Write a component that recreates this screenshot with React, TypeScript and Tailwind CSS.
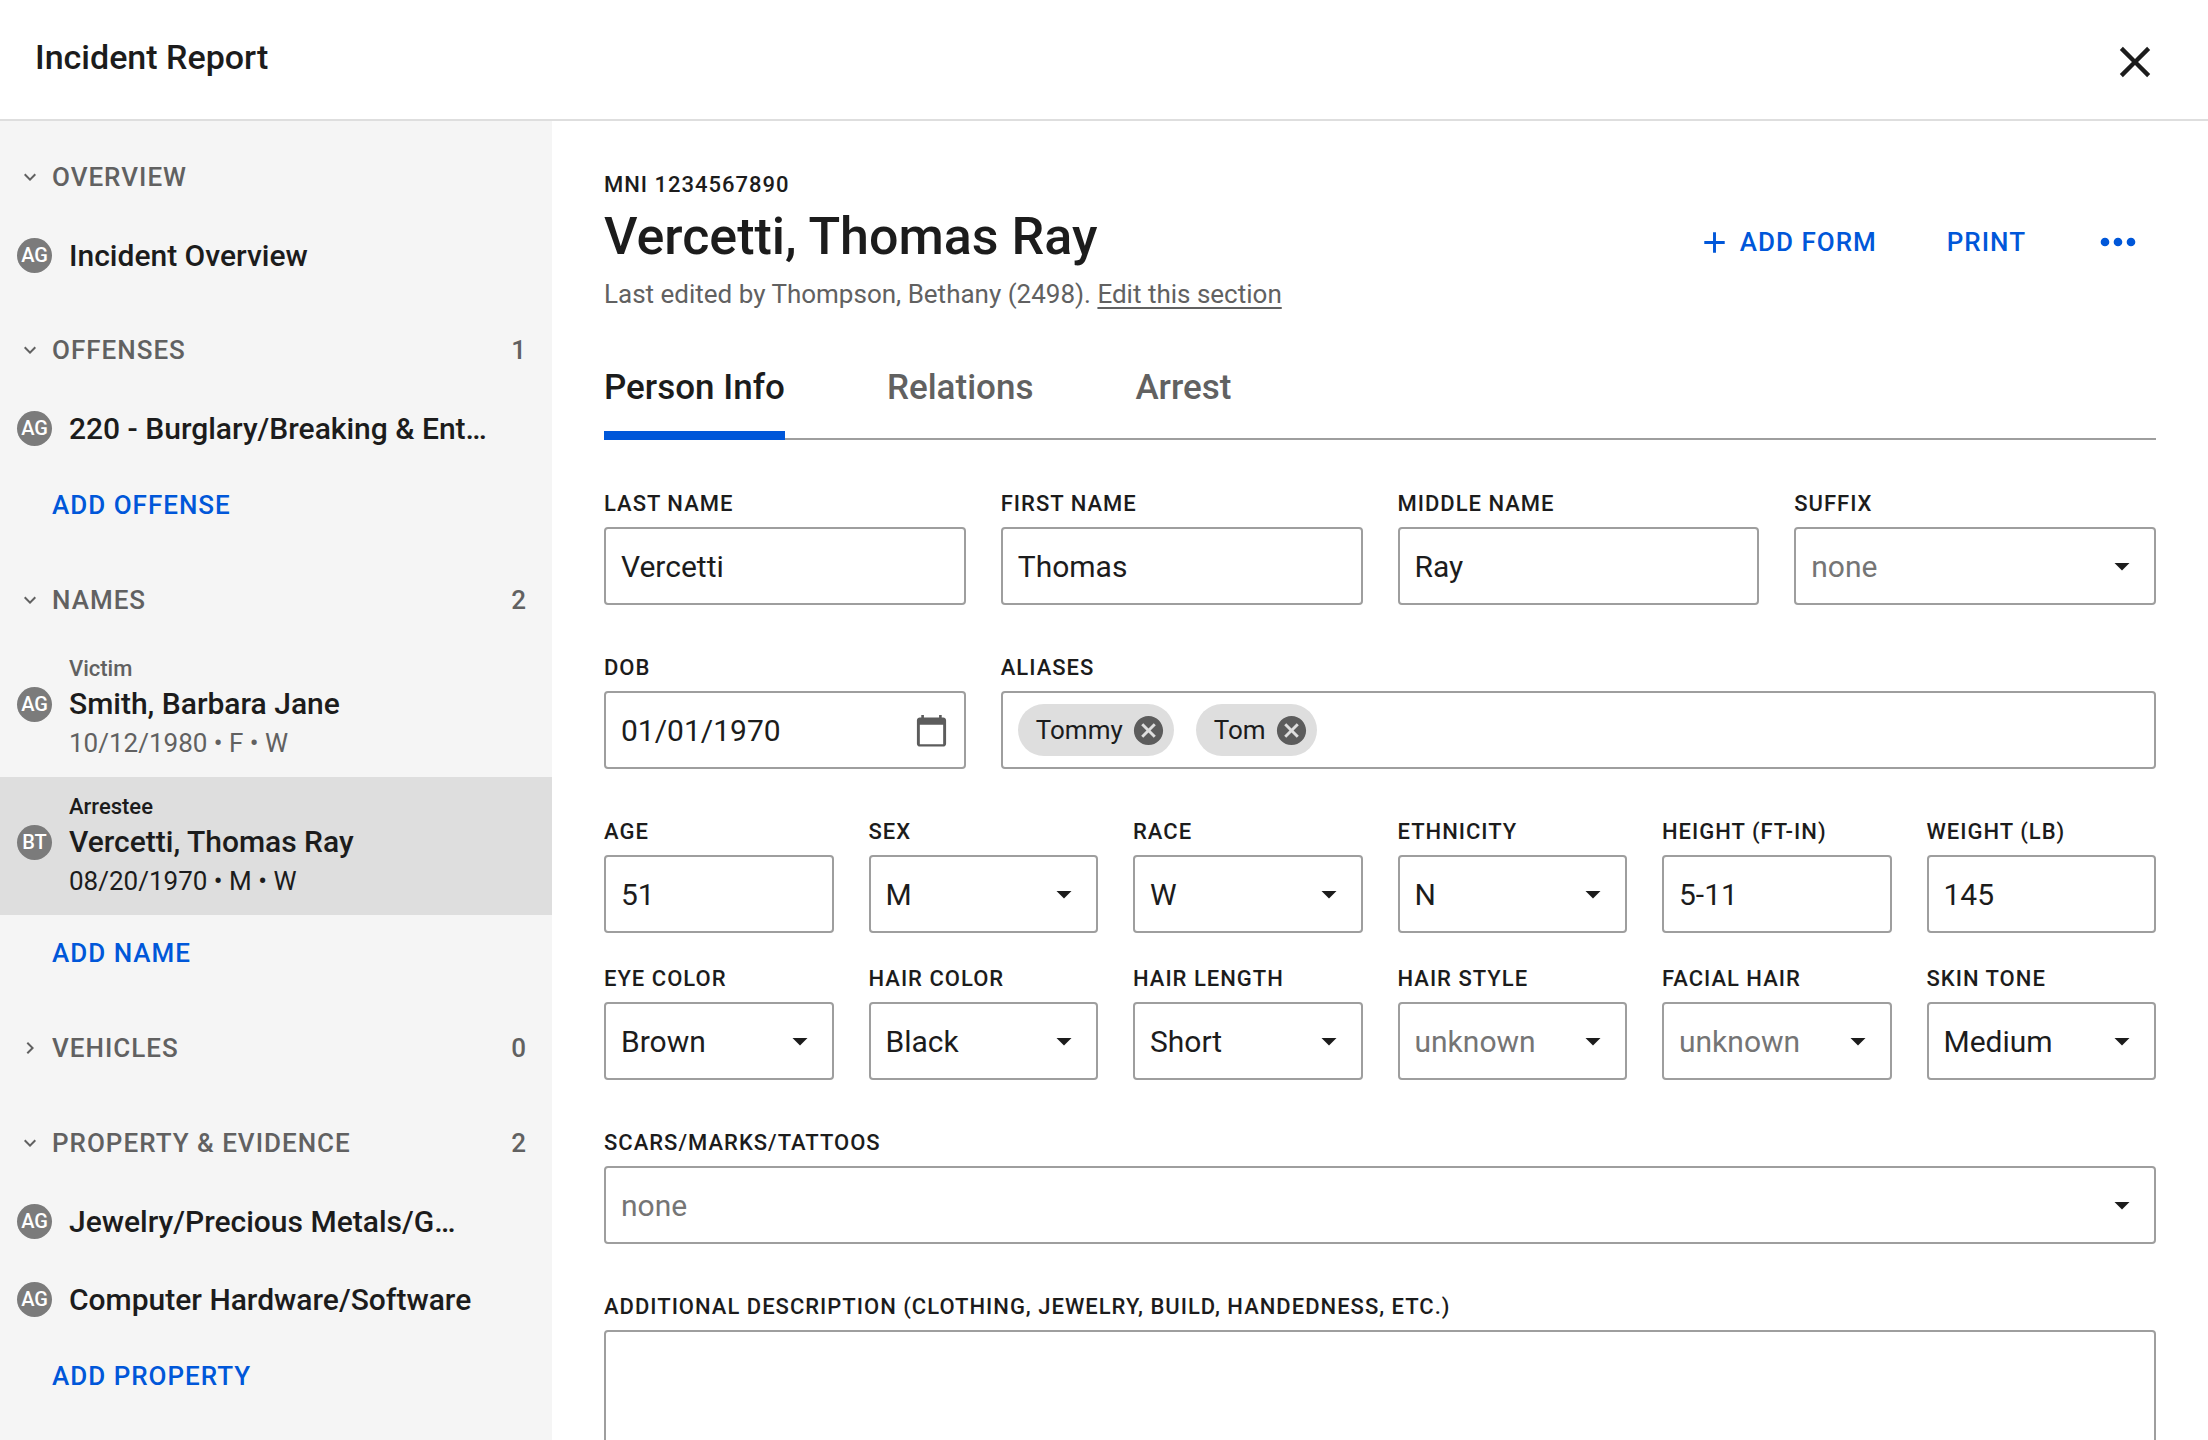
import { useState } from "react";
import type { ReactNode } from "react";
import {
  MdAdd,
  MdArrowDropDown,
  MdCancel,
  MdClose,
  MdKeyboardArrowDown,
  MdKeyboardArrowRight,
  MdMoreHoriz,
} from "react-icons/md";

type Item = {
  initials: string;
  title: string;
  role?: string;
  details?: string;
  active?: boolean;
};

type Section = {
  title: string;
  count?: number;
  collapsed?: boolean;
  items: Item[];
  action?: string;
};

const sections: Section[] = [
  {
    title: "Overview",
    items: [{ initials: "AG", title: "Incident Overview" }],
  },
  {
    title: "Offenses",
    count: 1,
    items: [{ initials: "AG", title: "220 - Burglary/Breaking & Ent…" }],
    action: "Add offense",
  },
  {
    title: "Names",
    count: 2,
    items: [
      {
        initials: "AG",
        role: "Victim",
        title: "Smith, Barbara Jane",
        details: "10/12/1980 • F • W",
      },
      {
        initials: "BT",
        role: "Arrestee",
        title: "Vercetti, Thomas Ray",
        details: "08/20/1970 • M • W",
        active: true,
      },
    ],
    action: "Add name",
  },
  { title: "Vehicles", count: 0, collapsed: true, items: [] },
  {
    title: "Property & Evidence",
    count: 2,
    items: [
      { initials: "AG", title: "Jewelry/Precious Metals/G…" },
      { initials: "AG", title: "Computer Hardware/Software" },
    ],
    action: "Add property",
  },
];

const tabs = ["Person Info", "Relations", "Arrest"];

function CalendarIcon() {
  return (
    <svg
      className="size-[35px] text-[#5c5c5c]"
      viewBox="0 0 24 24"
      fill="currentColor"
      aria-hidden="true"
    >
      <path d="M20 3h-1V1.4h-1.8V3H6.8V1.4H5V3H4c-1.1 0-2 .9-2 2v16c0 1.1.9 2 2 2h16c1.1 0 2-.9 2-2V5c0-1.1-.9-2-2-2zm0 18.4H4V8.1h16v13.3z" />
    </svg>
  );
}

function Avatar({ initials }: { initials: string }) {
  return (
    <span className="flex size-[35px] shrink-0 items-center justify-center rounded-full bg-[#7b7b7b] text-[20px] font-medium text-white">
      {initials}
    </span>
  );
}

function SidebarItem({ item }: { item: Item }) {
  if (item.role) {
    return (
      <a
        href="#"
        className={`grid h-[138px] grid-cols-[35px_1fr] content-center items-center gap-x-[17px] pl-[17px] ${
          item.active ? "bg-[#dedede] text-[#1c1c1c]" : "text-[#616161]"
        }`}
      >
        <span className="col-start-2 text-[22px] leading-[30px] font-medium">
          {item.role}
        </span>
        <Avatar initials={item.initials} />
        <span className="text-[30px] leading-10 font-medium text-[#1c1c1c]">
          {item.title}
        </span>
        <span className="col-start-2 text-[26px] leading-[38px]">
          {item.details}
        </span>
      </a>
    );
  }

  return (
    <a href="#" className="flex h-[78px] items-center gap-[17px] pl-[17px]">
      <Avatar initials={item.initials} />
      <span className="text-[30px] font-medium text-[#1c1c1c]">
        {item.title}
      </span>
    </a>
  );
}

function Field({
  id,
  label,
  className,
  children,
}: {
  id: string;
  label: string;
  className?: string;
  children: ReactNode;
}) {
  return (
    <div className={`flex min-w-0 flex-col gap-2.5 ${className ?? ""}`}>
      <label
        htmlFor={id}
        className="text-[22px] leading-[26px] font-medium tracking-[1px] uppercase"
      >
        {label}
      </label>
      {children}
    </div>
  );
}

function TextField({
  id,
  label,
  value,
}: {
  id: string;
  label: string;
  value: string;
}) {
  return (
    <Field id={id} label={label}>
      <input
        id={id}
        type="text"
        defaultValue={value}
        className="h-[78px] w-full rounded border-2 border-[#9e9e9e] bg-white px-[15px] text-[30px]"
      />
    </Field>
  );
}

function SelectField({
  id,
  label,
  value,
}: {
  id: string;
  label: string;
  value: string;
}) {
  const empty = value === "none" || value === "unknown";
  return (
    <Field id={id} label={label}>
      <div className="relative">
        <select
          id={id}
          defaultValue={value}
          className={`h-[78px] w-full appearance-none rounded border-2 border-[#9e9e9e] bg-white pr-14 pl-[15px] text-[30px] ${
            empty ? "text-[#757575]" : "text-[#1c1c1c]"
          }`}
        >
          <option>{value}</option>
        </select>
        <MdArrowDropDown className="pointer-events-none absolute inset-y-0 right-4 my-auto size-9" />
      </div>
    </Field>
  );
}

function Chip({ name }: { name: string }) {
  return (
    <span className="flex h-[52px] items-center gap-2 rounded-full bg-[#dedede] pr-2 pl-[18px] text-[26px]">
      {name}
      <button type="button" aria-label={`Remove ${name}`}>
        <MdCancel className="size-[35px] text-[#5c5c5c]" />
      </button>
    </span>
  );
}

export default function App() {
  const [tab, setTab] = useState("Person Info");

  return (
    <div className="flex h-screen flex-col overflow-hidden bg-white font-[Roboto,sans-serif] text-[#1c1c1c]">
      {/* Header */}
      <header className="flex h-[121px] shrink-0 items-center justify-between border-b-2 border-[#dedede] pr-[47px] pl-[35px]">
        <h1 className="pb-1 text-[34px] font-medium">Incident Report</h1>
        <button type="button" aria-label="Close" className="pt-1">
          <MdClose className="size-[52px]" />
        </button>
      </header>

      <div className="flex min-h-0 flex-1">
        {/* Sidebar */}
        <nav className="flex w-[25%] shrink-0 flex-col gap-[17px] bg-[#f5f5f5] pt-[17px]">
          {sections.map((section) => (
            <div key={section.title}>
              <button
                type="button"
                className="flex h-[78px] w-full items-center pr-[26px] pl-[18px] text-[26px] font-medium text-[#616161]"
              >
                {section.collapsed ? (
                  <MdKeyboardArrowRight className="size-6" />
                ) : (
                  <MdKeyboardArrowDown className="size-6" />
                )}
                <span className="ml-2.5 tracking-[1px] uppercase">
                  {section.title}
                </span>
                <span className="ml-auto">{section.count}</span>
              </button>
              {section.items.map((item) => (
                <SidebarItem key={item.title} item={item} />
              ))}
              {section.action && (
                <button
                  type="button"
                  className="flex h-[77px] items-center pl-[52px] text-[26px] font-medium tracking-[1px] text-[#0057d9] uppercase"
                >
                  {section.action}
                </button>
              )}
            </div>
          ))}
        </nav>

        {/* Person */}
        <main className="min-w-0 flex-1 overflow-hidden px-[52px] pt-[51px]">
          <div className="flex items-center justify-between">
            <div>
              <p className="text-[22px] leading-[26px] font-medium tracking-[1px]">
                MNI 1234567890
              </p>
              <h2 className="text-[52px] leading-[78px] font-medium">
                Vercetti, Thomas Ray
              </h2>
              <p className="text-[26px] leading-9 text-[#616161]">
                Last edited by Thompson, Bethany (2498).{" "}
                <a href="#" className="underline underline-offset-4">
                  Edit this section
                </a>
              </p>
            </div>
            <div className="flex items-center pr-3 text-[26px] font-medium text-[#0057d9]">
              <button
                type="button"
                className="flex items-center gap-2 tracking-[1px] uppercase"
              >
                <MdAdd className="size-[35px]" />
                Add form
              </button>
              <button type="button" className="ml-[70px] tracking-[1px] uppercase">
                Print
              </button>
              <button type="button" aria-label="More actions" className="ml-[66px]">
                <MdMoreHoriz className="size-[52px]" />
              </button>
            </div>
          </div>

          {/* Tabs */}
          <div
            role="tablist"
            className="mt-[23px] flex h-[105px] gap-[102px] border-b-2 border-[#9e9e9e]"
          >
            {tabs.map((name) => (
              <button
                key={name}
                type="button"
                role="tab"
                aria-selected={tab === name}
                onClick={() => setTab(name)}
                className={`-mb-0.5 border-b-[9px] pt-2.5 text-[35px] font-medium ${
                  tab === name
                    ? "border-[#0057d9]"
                    : "border-transparent text-[#616161]"
                }`}
              >
                {name}
              </button>
            ))}
          </div>

          <form className="mt-[51px] flex flex-col gap-[50px]">
            <div className="grid grid-cols-4 gap-x-[35px] gap-y-[50px]">
              <TextField id="last-name" label="Last name" value="Vercetti" />
              <TextField id="first-name" label="First name" value="Thomas" />
              <TextField id="middle-name" label="Middle name" value="Ray" />
              <SelectField id="suffix" label="Suffix" value="none" />

              <Field id="dob" label="DOB">
                <div className="flex h-[78px] items-center rounded border-2 border-[#9e9e9e] pr-[15px]">
                  <input
                    id="dob"
                    type="text"
                    defaultValue="01/01/1970"
                    className="h-full min-w-0 flex-1 pl-[15px] text-[30px]"
                  />
                  <button type="button" aria-label="Open calendar">
                    <CalendarIcon />
                  </button>
                </div>
              </Field>
              <Field id="aliases" label="Aliases" className="col-span-3">
                <div className="flex h-[78px] items-center gap-[22px] rounded border-2 border-[#9e9e9e] px-[15px]">
                  <Chip name="Tommy" />
                  <Chip name="Tom" />
                  <input
                    id="aliases"
                    type="text"
                    className="h-full min-w-0 flex-1 text-[30px]"
                  />
                </div>
              </Field>
            </div>

            <div className="grid grid-cols-6 gap-x-[35px] gap-y-[33px]">
              <TextField id="age" label="Age" value="51" />
              <SelectField id="sex" label="Sex" value="M" />
              <SelectField id="race" label="Race" value="W" />
              <SelectField id="ethnicity" label="Ethnicity" value="N" />
              <TextField id="height" label="Height (ft-in)" value="5-11" />
              <TextField id="weight" label="Weight (lb)" value="145" />
              <SelectField id="eye-color" label="Eye color" value="Brown" />
              <SelectField id="hair-color" label="Hair color" value="Black" />
              <SelectField id="hair-length" label="Hair length" value="Short" />
              <SelectField id="hair-style" label="Hair style" value="unknown" />
              <SelectField
                id="facial-hair"
                label="Facial hair"
                value="unknown"
              />
              <SelectField id="skin-tone" label="Skin tone" value="Medium" />
            </div>

            <SelectField id="scars" label="Scars/Marks/Tattoos" value="none" />

            <Field
              id="description"
              label="Additional description (clothing, jewelry, build, handedness, etc.)"
            >
              <textarea
                id="description"
                rows={6}
                className="w-full resize-none rounded border-2 border-[#9e9e9e] p-[15px] text-[30px]"
              />
            </Field>
          </form>
        </main>
      </div>
    </div>
  );
}
